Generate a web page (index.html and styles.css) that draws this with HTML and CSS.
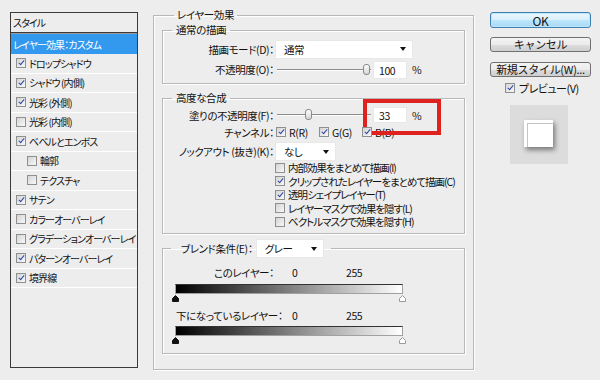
FILE: index.html
```html
<!DOCTYPE html>
<html lang="ja">
<head>
    <meta charset="UTF-8">
    <meta name="viewport" content="width=device-width, initial-scale=1.0">
    <title>レイヤースタイル</title>
  <link rel="stylesheet" href="styles.css">
</head>
<body>

<div class="dialog">
    <div class="styles-panel">
        <div class="panel-head">スタイル</div>
        <div class="style-item selected">レイヤー効果：カスタム</div>
        <div class="style-item"><span class="cb on"></span>ドロップシャドウ</div>
        <div class="style-item"><span class="cb on"></span>シャドウ (内側)</div>
        <div class="style-item"><span class="cb on"></span>光彩 (外側)</div>
        <div class="style-item"><span class="cb"></span>光彩 (内側)</div>
        <div class="style-item"><span class="cb on"></span>ベベルとエンボス</div>
        <div class="style-item sub"><span class="cb"></span>輪郭</div>
        <div class="style-item sub"><span class="cb"></span>テクスチャ</div>
        <div class="style-item"><span class="cb on"></span>サテン</div>
        <div class="style-item"><span class="cb"></span>カラーオーバーレイ</div>
        <div class="style-item"><span class="cb"></span>グラデーションオーバーレイ</div>
        <div class="style-item"><span class="cb on"></span>パターンオーバーレイ</div>
        <div class="style-item"><span class="cb on"></span>境界線</div>
    </div>

    <fieldset class="group outer">
        <legend>レイヤー効果</legend>

        <fieldset class="group normal">
            <legend>通常の描画</legend>
            <div class="row first">
                <span class="label">描画モード(D)：</span>
                <div class="select mode">通常</div>
            </div>
            <div class="row opacity">
                <span class="label">不透明度(O)：</span>
                <div class="slider"><span class="thumb" style="left:86px"></span></div>
                <div class="num">100</div>
                <span class="pct">%</span>
            </div>
        </fieldset>

        <fieldset class="group advanced">
            <legend>高度な合成</legend>
            <div class="row fill">
                <span class="label">塗りの不透明度(F)：</span>
                <div class="slider"><span class="thumb" style="left:28px"></span></div>
                <div class="num-wrap">
                    <div class="num">33</div>
                    <span class="pct">%</span>
                    <span class="highlight"></span>
                </div>
            </div>
            <div class="row channels">
                <span class="label">チャンネル：</span>
                <span class="chan"><span class="cb on"></span>R(R)</span>
                <span class="chan"><span class="cb on"></span>G(G)</span>
                <span class="chan"><span class="cb on"></span>B(B)</span>
            </div>
            <div class="row knockout">
                <span class="label">ノックアウト (抜き)(K)：</span>
                <div class="select small">なし</div>
            </div>
            <ul class="options">
                <li><span class="cb"></span>内部効果をまとめて描画(I)</li>
                <li><span class="cb on"></span>クリップされたレイヤーをまとめて描画(C)</li>
                <li><span class="cb on"></span>透明シェイプレイヤー(T)</li>
                <li><span class="cb"></span>レイヤーマスクで効果を隠す(L)</li>
                <li><span class="cb"></span>ベクトルマスクで効果を隠す(H)</li>
            </ul>
        </fieldset>

        <fieldset class="group blend">
            <legend>ブレンド条件(E)：<div class="select blend-select">グレー</div></legend>
            <div class="row range-row">
                <span class="label">このレイヤー：</span>
                <span class="low">0</span>
                <span>255</span>
            </div>
            <div class="ramp"></div>
            <div class="stops">
                <svg width="7" height="7" viewBox="0 0 7 7"><path d="M0.5 6.5V3.5L3.5 0.5L6.5 3.5V6.5Z" fill="#111" stroke="#111"/></svg>
                <svg width="7" height="7" viewBox="0 0 7 7"><path d="M0.5 6.5V3.5L3.5 0.5L6.5 3.5V6.5Z" fill="#fff" stroke="#9a9a9a"/></svg>
            </div>
            <div class="row range-row second">
                <span class="label left">下になっているレイヤー：</span>
                <span class="low">0</span>
                <span>255</span>
            </div>
            <div class="ramp"></div>
            <div class="stops">
                <svg width="7" height="7" viewBox="0 0 7 7"><path d="M0.5 6.5V3.5L3.5 0.5L6.5 3.5V6.5Z" fill="#111" stroke="#111"/></svg>
                <svg width="7" height="7" viewBox="0 0 7 7"><path d="M0.5 6.5V3.5L3.5 0.5L6.5 3.5V6.5Z" fill="#fff" stroke="#9a9a9a"/></svg>
            </div>
        </fieldset>
    </fieldset>

    <div class="actions">
        <button class="btn ok">OK</button>
        <button class="btn">キャンセル</button>
        <button class="btn">新規スタイル(W)...</button>
        <div class="preview-check"><span class="cb on"></span>プレビュー(V)</div>
        <div class="swatch"><div class="swatch-box"></div></div>
    </div>
</div>

</body>
</html>
```

FILE: styles.css
```css
*{
    margin: 0;
    padding: 0;
    box-sizing: border-box;
}

body{
    background: #ededed;
    font-family: "Noto Sans CJK JP", "Liberation Sans", sans-serif;
    font-size: 10.5px;
    letter-spacing: -0.4px;
    font-feature-settings: "palt";
    color: #111;
}

.dialog{
    display: flex;
    align-items: flex-start;
    padding: 12px 10px;
}

/* left list */
.styles-panel{
    flex: none;
    width: 128px;
    height: 356px;
    border: 1px solid #3a3a3a;
    background: #ededed;
    font-size: 10px;
    letter-spacing: -0.9px;
    overflow: hidden;
}
.panel-head{
    height: 20px;
    line-height: 19px;
    padding-left: 2px;
    border-bottom: 1px solid #3a3a3a;
    box-shadow: 0 1px 0 #9a9a9a;
}
.style-item{
    display: flex;
    align-items: center;
    height: 19.5px;
    padding-left: 5px;
    border-bottom: 1px solid #fff;
    white-space: nowrap;
}
.style-item .cb{
    margin-right: 3px;
}
.style-item.sub{
    padding-left: 16px;
}
.style-item.selected{
    height: 20px;
    margin-top: 1px;
    padding-left: 2px;
    background: #3399ee;
    color: #fff;
    border-bottom: none;
}

/* checkbox */
.cb{
    display: inline-block;
    position: relative;
    flex: none;
    width: 10px;
    height: 10px;
    border: 1px solid #8e8f8f;
    background: linear-gradient(135deg, #d4d4d4, #f8f8f8);
}
.cb.on::after{
    content: '';
    position: absolute;
    left: 2.5px;
    top: 0px;
    width: 2px;
    height: 5px;
    border-right: 1.5px solid #2b46a6;
    border-bottom: 1.5px solid #2b46a6;
    transform: rotate(40deg);
}

/* group boxes */
.group{
    min-width: 0;
    border: 1px solid #b8b8b8;
    box-shadow: inset 1px 1px 0 #fff, 1px 1px 0 #fff;
}
.group legend{
    line-height: 14px;
    padding: 0 4px;
}
.outer{
    flex: none;
    width: 321px;
    margin: -4px 0 0 15px;
    padding: 0 8px 15px;
}
.outer > legend{
    margin-left: 12px;
    padding: 0 3px;
}
.normal{
    margin-top: 1px;
    padding-bottom: 4px;
}
.normal legend, .advanced legend{
    margin-left: 9px;
}
.advanced{
    margin-top: 7px;
    padding-bottom: 4px;
}
.blend{
    margin-top: 5px;
    padding-bottom: 9px;
}
.blend legend{
    display: flex;
    align-items: center;
    margin-left: 8px;
    padding: 0 7px 0 10px;
    line-height: 20px;
}

.row{
    display: flex;
    align-items: center;
}
.label{
    width: 111px;
    margin-right: 1px;
    text-align: right;
    white-space: nowrap;
}
.row.first{
    height: 20px;
    margin-top: 2px;
}
.row.opacity{
    height: 19px;
    margin-top: 1px;
}

.select{
    display: flex;
    align-items: center;
    justify-content: space-between;
    height: 19px;
    padding: 0 6px 0 8px;
    background: #fff;
    border: 1px solid #e8e8e8;
}
.select::after{
    content: '';
    border-left: 3.5px solid transparent;
    border-right: 3.5px solid transparent;
    border-top: 4px solid #111;
}
.select.mode{
    width: 138px;
}
.select.small{
    width: 61px;
}
.select.blend-select{
    width: 68px;
    margin-left: 3px;
}

.slider{
    position: relative;
    width: 94px;
    height: 2px;
    margin-left: 2px;
    background: linear-gradient(#8c8c8c 50%, #fff 50%);
}
.thumb{
    position: absolute;
    top: -5px;
    width: 7px;
    height: 11px;
    border: 1px solid #8a8a8a;
    border-radius: 3px;
    background: linear-gradient(#fdfdfd, #d6d6d6);
}
.num{
    width: 34px;
    height: 18px;
    line-height: 17px;
    margin-left: 2px;
    padding-left: 5px;
    background: #fff;
    border: 1px solid #e8e8e8;
}
.pct{
    margin-left: 5px;
}
.num-wrap{
    position: relative;
    display: flex;
    align-items: center;
}
.highlight{
    position: absolute;
    left: -8px;
    top: -8px;
    width: 78px;
    height: 36px;
    border: 4px solid #e0221f;
}

.row.fill{
    height: 18px;
    margin-top: 1px;
}
.row.fill .num{
    height: 16px;
    line-height: 15px;
}
.row.channels{
    height: 16px;
}
.chan{
    display: flex;
    align-items: center;
    width: 42px;
    margin-left: 1px;
}
.chan .cb{
    margin-right: 3px;
}
.row.knockout{
    height: 19px;
    margin-top: 2px;
}
.options{
    list-style: none;
    margin-left: 112px;
    letter-spacing: -1px;
}
.options li{
    display: flex;
    align-items: center;
    height: 13.5px;
    white-space: nowrap;
}
.options .cb{
    margin-right: 3px;
}

.range-row{
    height: 14px;
    margin-top: 7px;
}
.label.left{
    text-align: left;
    padding-left: 13px;
}
.low{
    width: 71px;
    padding-left: 17px;
}
.ramp{
    width: 228px;
    height: 10px;
    margin: 4px 0 0 12px;
    border: 1px solid #a0a0a0;
    border-top-color: #333;
    background: linear-gradient(to right, #000, #fff);
}
.range-row.second + .ramp{
    margin-top: 3px;
}
.stops{
    display: flex;
    justify-content: space-between;
    width: 234px;
    height: 7px;
    margin: 1px 0 0 9px;
}
.stops svg{
    display: block;
}

/* buttons on the right */
.actions{
    flex: none;
    display: flex;
    flex-direction: column;
    width: 101px;
    margin-left: 16px;
}
.btn{
    height: 15px;
    margin-bottom: 10px;
    font-family: inherit;
    font-size: 11px;
    letter-spacing: -0.3px;
    line-height: 13px;
    white-space: nowrap;
    color: #111;
    border: 1px solid #707070;
    border-radius: 3px;
    background: linear-gradient(#f4f4f4 0, #ebebeb 50%, #dddddd 51%, #cfcfcf 100%);
}
.btn.ok{
    height: 16px;
    margin-bottom: 9px;
    font-size: 12px;
    border-color: #3c7fb1;
    box-shadow: inset 0 0 0 1px #bfe6fb;
    background: linear-gradient(#eaf6fd 0, #d9f0fc 50%, #bee6fd 51%, #a7d9f5 100%);
}
.preview-check{
    display: flex;
    align-items: center;
    height: 14px;
    margin-top: -6px;
    padding-left: 15px;
    font-size: 11px;
    letter-spacing: -0.5px;
    white-space: nowrap;
}
.preview-check .cb{
    margin-right: 4px;
}
.swatch{
    display: flex;
    align-items: center;
    justify-content: center;
    width: 58px;
    height: 59px;
    margin: 10px 0 0 20px;
    background: #dcdcdc;
}
.swatch-box{
    width: 29px;
    height: 27px;
    margin: -2px 1px 0 0;
    background: #fff;
    box-shadow: inset 3px 3px 0 #fff, inset 4px 4px 0 #c4c4c4, 2px 3px 5px rgba(0,0,0,0.45);
}
```
